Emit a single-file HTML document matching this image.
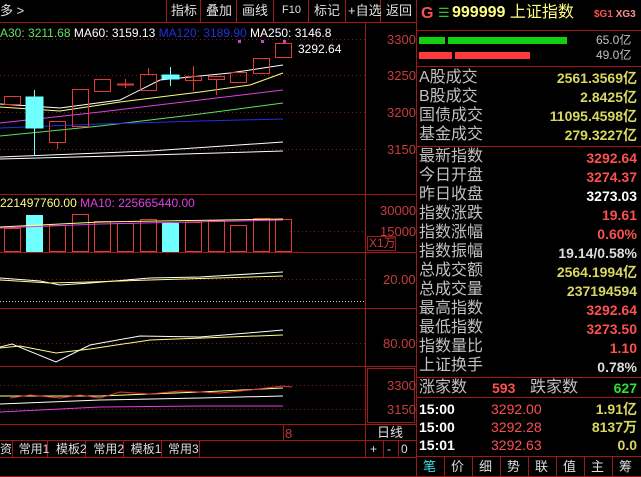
<!DOCTYPE html>
<html><head><meta charset="utf-8"><style>
body{margin:0;width:641px;height:477px;background:#000;overflow:hidden;position:relative;font-family:"Liberation Sans","Noto Sans CJK SC",sans-serif;color:#c0c0c0}
.a{position:absolute;white-space:nowrap;line-height:1}
.cn{font-size:16px;color:#c0c0c0}
.n{font-size:14px;font-weight:bold;text-align:right;right:4px}
.y{color:#d8d860}.r{color:#ff5050}.w{color:#fff}.g{color:#30e030}
.tb{font-size:13px;color:#e0e0e0}
.ax{font-size:13px;color:#c83c3c}
</style></head><body>
<svg class="a" style="left:0;top:0" width="641" height="477">
<g stroke="#a01818" stroke-width="1" fill="none">
<line x1="0" y1="22.5" x2="416" y2="22.5"/>
<line x1="166.5" y1="0" x2="166.5" y2="22"/><line x1="200.5" y1="0" x2="200.5" y2="22"/><line x1="236.5" y1="0" x2="236.5" y2="22"/><line x1="273.5" y1="0" x2="273.5" y2="22"/><line x1="308.5" y1="0" x2="308.5" y2="22"/><line x1="345.5" y1="0" x2="345.5" y2="22"/><line x1="380.5" y1="0" x2="380.5" y2="22"/>
<line x1="365.5" y1="22" x2="365.5" y2="457"/>
<line x1="416.5" y1="0" x2="416.5" y2="477"/>
<line x1="0" y1="194.5" x2="416" y2="194.5"/>
<line x1="0" y1="252.5" x2="416" y2="252.5"/>
<line x1="0" y1="308.5" x2="416" y2="308.5"/>
<line x1="0" y1="366.5" x2="416" y2="366.5"/>
<line x1="0" y1="424.5" x2="416" y2="424.5"/>
<line x1="0" y1="440.5" x2="416" y2="440.5"/>
<line x1="0" y1="457.5" x2="416" y2="457.5"/>
<line x1="0" y1="476.5" x2="641" y2="476.5"/>
<rect x="367.5" y="368.5" width="47" height="54"/>
<line x1="283.5" y1="424" x2="283.5" y2="440"/>
<line x1="12.5" y1="440" x2="12.5" y2="457"/><line x1="47.5" y1="440" x2="47.5" y2="457"/><line x1="85.5" y1="440" x2="85.5" y2="457"/><line x1="123.5" y1="440" x2="123.5" y2="457"/><line x1="161.5" y1="440" x2="161.5" y2="457"/><line x1="199.5" y1="440" x2="199.5" y2="457"/>
<line x1="383.5" y1="440" x2="383.5" y2="457"/><line x1="398.5" y1="440" x2="398.5" y2="457"/>
<line x1="416" y1="30.5" x2="641" y2="30.5"/><line x1="416" y1="66.5" x2="641" y2="66.5"/><line x1="416" y1="146.5" x2="641" y2="146.5"/><line x1="416" y1="377.5" x2="641" y2="377.5"/><line x1="416" y1="397.5" x2="641" y2="397.5"/><line x1="416" y1="456.5" x2="641" y2="456.5"/>
<line x1="444.5" y1="457" x2="444.5" y2="477"/><line x1="472.5" y1="457" x2="472.5" y2="477"/><line x1="500.5" y1="457" x2="500.5" y2="477"/><line x1="528.5" y1="457" x2="528.5" y2="477"/><line x1="556.5" y1="457" x2="556.5" y2="477"/><line x1="584.5" y1="457" x2="584.5" y2="477"/><line x1="612.5" y1="457" x2="612.5" y2="477"/>
<rect x="367.5" y="236.5" width="28" height="14"/>
</g>
<g stroke="#801818" stroke-dasharray="1,3">
<line x1="0" y1="39.5" x2="365" y2="39.5"/><line x1="0" y1="75.5" x2="365" y2="75.5"/><line x1="0" y1="112.5" x2="365" y2="112.5"/><line x1="0" y1="149.5" x2="365" y2="149.5"/>
<line x1="290" y1="231.5" x2="365" y2="231.5"/><line x1="0" y1="279.5" x2="365" y2="279.5"/><line x1="0" y1="343.5" x2="365" y2="343.5"/><line x1="0" y1="385.5" x2="365" y2="385.5"/><line x1="0" y1="409.5" x2="365" y2="409.5"/>
</g>
<line x1="0" y1="301.5" x2="365" y2="301.5" stroke="#ccc" stroke-dasharray="1,2"/>
<g fill="none" stroke-width="1">
<polyline stroke="#fff" points="0,104 60,108 120,100 160,80 230,73 283,65"/>
<polyline stroke="#ffff80" points="0,107 60,111 120,102 200,92 250,85 283,73"/>
<polyline stroke="#e040e0" points="0,123 100,112 200,100 283,90"/>
<polyline stroke="#60e060" points="0,136 100,126 200,114 283,103"/>
<polyline stroke="#2030e0" points="0,128 100,124 200,121 283,119"/>
<polyline stroke="#fff" points="0,157 150,151 283,142"/>
<polyline stroke="#fff" points="0,159 150,155 283,151"/>
</g>
<g stroke="#e03a3a" fill="none">
<rect x="4.5" y="96.5" width="16" height="8"/>
<rect x="49.5" y="121.5" width="16" height="21"/><line x1="57.5" y1="142" x2="57.5" y2="149"/>
<rect x="72.5" y="89.5" width="16" height="37"/>
<rect x="94.5" y="79.5" width="16" height="12"/>
<line x1="117" y1="84.5" x2="134" y2="84.5" stroke-width="2"/><line x1="125.5" y1="79" x2="125.5" y2="88"/>
<rect x="140.5" y="74.5" width="16" height="16"/><line x1="148.5" y1="68" x2="148.5" y2="74"/>
<rect x="185.5" y="76.5" width="16" height="4"/><line x1="193.5" y1="66" x2="193.5" y2="91"/>
<rect x="208.5" y="76.5" width="16" height="3"/><line x1="216.5" y1="79" x2="216.5" y2="95"/>
<rect x="230.5" y="72.5" width="16" height="10"/>
<rect x="253.5" y="58.5" width="16" height="15"/>
<rect x="275.5" y="43.5" width="16" height="14"/>
</g>
<g fill="#70ffff" stroke="#70ffff">
<rect x="26" y="97" width="17" height="31"/><line x1="34.5" y1="90" x2="34.5" y2="156"/>
<rect x="162" y="75" width="17" height="4"/><line x1="170.5" y1="67" x2="170.5" y2="86"/>
</g>
<g fill="#d040d0"><rect x="238" y="40" width="3" height="3"/><rect x="261" y="40" width="3" height="3"/><rect x="283" y="40" width="3" height="3"/></g>
<g stroke="#e03a3a" fill="none">
<rect x="4.5" y="228.5" width="16" height="23"/><rect x="49.5" y="225.5" width="16" height="26"/><rect x="72.5" y="214.5" width="16" height="37"/><rect x="94.5" y="221.5" width="16" height="30"/><rect x="117.5" y="223.5" width="16" height="28"/><rect x="140.5" y="219.5" width="16" height="32"/><rect x="185.5" y="222.5" width="16" height="29"/><rect x="208.5" y="220.5" width="16" height="31"/><rect x="230.5" y="225.5" width="16" height="26"/><rect x="253.5" y="218.5" width="16" height="33"/><rect x="275.5" y="219.5" width="16" height="32"/>
</g>
<g fill="#70ffff"><rect x="26" y="215" width="17" height="37"/><rect x="162" y="223" width="17" height="29"/></g>
<polyline fill="none" stroke="#e040e0" points="0,228 100,224 283,220"/>
<polyline fill="none" stroke="#ffff80" points="0,227 100,222 283,219"/>
<polyline fill="none" stroke="#fff" points="0,278 40,281 60,285 90,283 150,278 200,277 283,272"/>
<polyline fill="none" stroke="#ffff80" points="0,280 50,283 90,282 150,280 283,276"/>
<polyline fill="none" stroke="#fff" points="0,347 12,344 56,362 90,345 140,336 200,337 283,330"/>
<polyline fill="none" stroke="#ffff80" points="0,348 20,346 56,353 90,349 150,340 283,335"/>
<polyline fill="none" stroke="#e040e0" points="0,412 100,407 200,406 283,406"/>
<polyline fill="none" stroke="#fff" points="0,404 100,400 200,398 283,396"/>
<polyline fill="none" stroke="#ffff80" points="0,396 100,396 200,392 283,388"/>
<polyline fill="none" stroke="#e03a3a" points="10,398 30,395 60,398 80,395 100,398 120,392 150,394 180,391 220,393 250,390 283,386 292,387"/>
<rect x="419" y="37" width="26" height="7" fill="#10d010"/><rect x="448" y="37" width="119" height="7" fill="#10d010"/>
<rect x="419" y="52" width="33" height="7" fill="#ff3a3a"/><rect x="455" y="52" width="75" height="7" fill="#ff3a3a"/>
</svg>
<div class="a tb" style="left:0px;top:4px">多 &gt;</div>
<div class="a tb" style="left:171px;top:4px">指标</div><div class="a tb" style="left:206px;top:4px">叠加</div><div class="a tb" style="left:242px;top:4px">画线</div><div class="a tb" style="left:282px;top:5px;font-size:11px">F10</div><div class="a tb" style="left:314px;top:4px">标记</div><div class="a tb" style="left:348px;top:4px">+自选</div><div class="a tb" style="left:386px;top:4px">返回</div>
<div class="a" style="left:0px;top:27px;font-size:12px"><span style="color:#60e060">A30: 3211.68</span> <span style="color:#fff">MA60: 3159.13</span> <span style="color:#2030e0">MA120: 3189.90</span> <span style="color:#fff">MA250: 3146.8</span></div>
<div class="a" style="left:298px;top:43px;font-size:12px;color:#fff">3292.64</div>
<div class="a" style="left:0px;top:197px;font-size:12px"><span style="color:#ffff80">221497760.00</span> <span style="color:#e040e0">MA10: 225665440.00</span></div>
<div class="a ax" style="left:387px;top:33px">3300</div><div class="a ax" style="left:387px;top:69px">3250</div><div class="a ax" style="left:387px;top:106px">3200</div><div class="a ax" style="left:387px;top:143px">3150</div>
<div class="a ax" style="left:380px;top:204px">30000</div><div class="a ax" style="left:380px;top:225px">15000</div><div class="a ax" style="left:369px;top:237px;font-size:12px">X1万</div>
<div class="a ax" style="left:383px;top:273px">20.00</div><div class="a ax" style="left:383px;top:337px">80.00</div>
<div class="a ax" style="left:387px;top:379px">3300</div><div class="a ax" style="left:387px;top:403px">3150</div>
<div class="a ax" style="left:285px;top:427px">8</div>
<div class="a tb" style="left:377px;top:426px">日线</div>
<div class="a" style="left:0px;top:443px;font-size:12px;color:#ddd">资 &nbsp;常用1 &nbsp;模板2 &nbsp;常用2 &nbsp;模板1 &nbsp;常用3</div>
<div class="a" style="left:370px;top:443px;font-size:12px;color:#ddd">+ &nbsp;&nbsp;- &nbsp;&nbsp;0</div>
<div class="a" style="left:421px;top:6px;font-size:16px;color:#ff5050;font-weight:bold">G</div>
<div class="a" style="left:438px;top:6px;font-size:13px;color:#30c030">☰</div>
<div class="a" style="left:452px;top:5px;font-size:16px;color:#ffff80"><b>999999</b> 上证指数</div>
<div class="a" style="left:594px;top:10px;font-size:10px;color:#ff5050;font-weight:bold">$G1 <span style="color:#ff9090">XG3</span></div>
<div class="a" style="left:596px;top:34px;font-size:12px">65.0亿</div><div class="a" style="left:596px;top:49px;font-size:12px">49.0亿</div>
<div class="a cn" style="left:419px;top:70px">A股成交</div><div class="a n y" style="top:71px">2561.3569亿</div>
<div class="a cn" style="left:419px;top:89px">B股成交</div><div class="a n y" style="top:90px">2.8425亿</div>
<div class="a cn" style="left:419px;top:108px">国债成交</div><div class="a n y" style="top:109px">11095.4598亿</div>
<div class="a cn" style="left:419px;top:127px">基金成交</div><div class="a n y" style="top:128px">279.3227亿</div>
<div class="a cn" style="left:419px;top:149px">最新指数</div><div class="a n r" style="top:151px">3292.64</div>
<div class="a cn" style="left:419px;top:168px">今日开盘</div><div class="a n r" style="top:170px">3274.37</div>
<div class="a cn" style="left:419px;top:187px">昨日收盘</div><div class="a n w" style="top:189px">3273.03</div>
<div class="a cn" style="left:419px;top:206px">指数涨跌</div><div class="a n r" style="top:208px">19.61</div>
<div class="a cn" style="left:419px;top:225px">指数涨幅</div><div class="a n r" style="top:227px">0.60%</div>
<div class="a cn" style="left:419px;top:244px">指数振幅</div><div class="a n" style="top:246px;color:#ddd">19.14/0.58%</div>
<div class="a cn" style="left:419px;top:263px">总成交额</div><div class="a n y" style="top:265px">2564.1994亿</div>
<div class="a cn" style="left:419px;top:282px">总成交量</div><div class="a n y" style="top:284px">237194594</div>
<div class="a cn" style="left:419px;top:301px">最高指数</div><div class="a n r" style="top:303px">3292.64</div>
<div class="a cn" style="left:419px;top:320px">最低指数</div><div class="a n r" style="top:322px">3273.50</div>
<div class="a cn" style="left:419px;top:339px">指数量比</div><div class="a n r" style="top:341px">1.10</div>
<div class="a cn" style="left:419px;top:358px">上证换手</div><div class="a n" style="top:360px;color:#ddd">0.78%</div>
<div class="a cn" style="left:419px;top:380px">涨家数</div><div class="a r" style="left:492px;top:381px;font-size:14px;font-weight:bold">593</div><div class="a cn" style="left:530px;top:380px">跌家数</div><div class="a n g" style="top:381px">627</div>
<div class="a w" style="left:419px;top:402px;font-size:14px;font-weight:bold">15:00</div><div class="a r" style="left:491px;top:402px;font-size:14px">3292.00</div><div class="a n y" style="top:402px">1.91亿</div>
<div class="a w" style="left:419px;top:420px;font-size:14px;font-weight:bold">15:00</div><div class="a r" style="left:491px;top:420px;font-size:14px">3292.28</div><div class="a n y" style="top:420px">8137万</div>
<div class="a w" style="left:419px;top:438px;font-size:14px;font-weight:bold">15:01</div><div class="a r" style="left:491px;top:438px;font-size:14px">3292.63</div><div class="a n y" style="top:438px">0.0</div>
<div class="a" style="left:423px;top:460px;font-size:13px;color:#ddd;letter-spacing:15px"><span style="color:#40e0e0">笔</span>价细势联值主筹</div>
</body></html>
